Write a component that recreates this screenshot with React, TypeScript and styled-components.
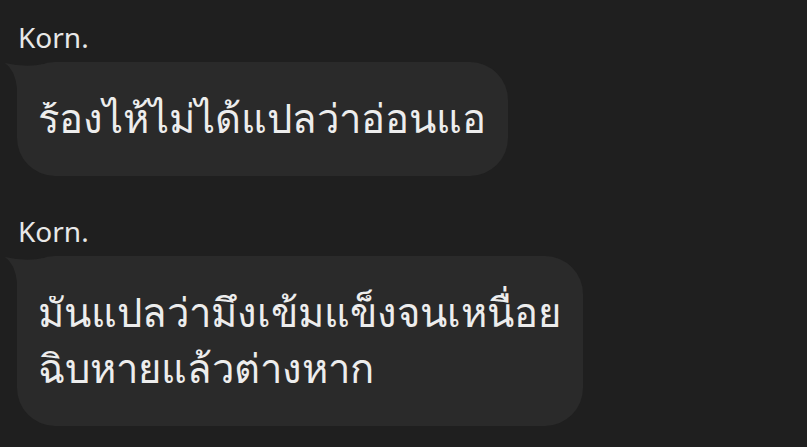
import React from "react";
import styled, { createGlobalStyle } from "styled-components";

const Global = createGlobalStyle`
  html, body { margin: 0; padding: 0; background: #1f1f1f; }
  body { font-family: "Noto Sans", "Liberation Sans", sans-serif; }
`;

const Page = styled.div`
  width: 807px;
  height: 447px;
  background: #1f1f1f;
  padding: 21px 0 0 17px;
  box-sizing: border-box;
  display: flex;
  flex-direction: column;
  gap: 39px;
  overflow: hidden;
`;

const Message = styled.div`
  display: flex;
  flex-direction: column;
  align-items: flex-start;
  gap: 9px;
`;

const Sender = styled.div`
  color: #e8e8e8;
  font-size: 28px;
  line-height: 32px;
  padding-left: 1px;
`;

const Bubble = styled.div`
  position: relative;
  background: #2a2a2a;
  color: #ededed;
  border-radius: 38px;
  padding: 28px 22px 30px 21px;
  font-size: 40px;
  line-height: 56px;
`;

const Tail = styled.svg`
  position: absolute;
  left: -13px;
  top: 0;
`;

const Msg = ({ text }: { text: React.ReactNode }) => (
  <Message>
    <Sender>Korn.</Sender>
    <Bubble>
      <Tail width="54" height="40" viewBox="0 0 54 40">
        <path
          d="M1 1 Q22 6 40 2 L54 0 L54 40 L13 40 L13 26 Q11 8 1 1 Z"
          fill="#2a2a2a"
        />
      </Tail>
      {text}
    </Bubble>
  </Message>
);

export default function App() {
  return (
    <>
      <Global />
      <Page>
        <Msg text="ร้องไห้ไม่ได้แปลว่าอ่อนแอ" />
        <Msg
          text={
            <>
              มันแปลว่ามึงเข้มแข็งจนเหนื่อย
              <br />
              ฉิบหายแล้วต่างหาก
            </>
          }
        />
      </Page>
    </>
  );
}
